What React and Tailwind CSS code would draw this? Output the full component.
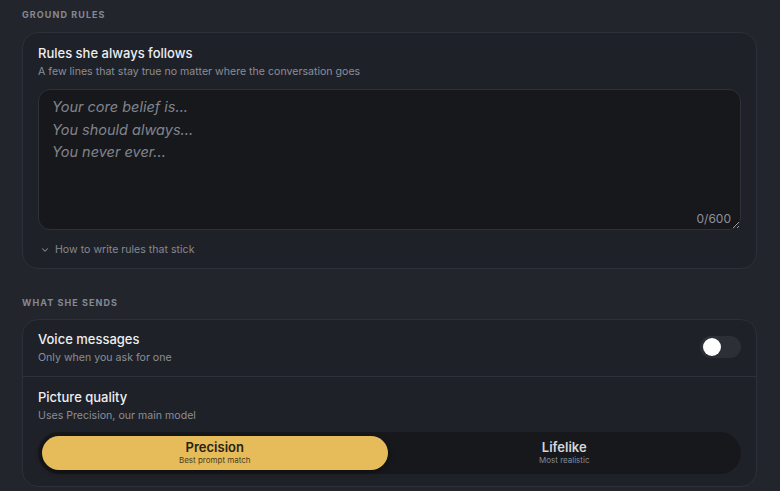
import React, { useState } from 'react';

const SectionLabel = ({ children, className = '' }) => (
  <div className={`px-[22px] text-[9px] leading-[12px] font-bold tracking-[0.12em] text-[#858993] ${className}`}>
    {children}
  </div>
);

export default function App() {
  const [voice, setVoice] = useState(false);
  const [quality, setQuality] = useState('precision');
  const [rules, setRules] = useState('');

  return (
    <div
      className="min-h-[491px] w-[780px] bg-[#23252c] pt-[9px] text-[#e6e7ea] overflow-hidden"
      style={{ fontFamily: 'Inter, "Noto Sans", sans-serif' }}
    >
      <SectionLabel>GROUND RULES</SectionLabel>

      {/* Rules card */}
      <div className="mx-[22px] mr-[23px] mt-[11px] h-[237px] rounded-[16px] border border-[#2d3038] bg-[#1f2128] px-[15px] pt-[11px]">
        <div className="text-[13px] leading-[18px] font-medium text-[#eceef1]">Rules she always follows</div>
        <div className="mt-[2px] text-[10.6px] leading-[16px] text-[#8a8e97]">
          A few lines that stay true no matter where the conversation goes
        </div>

        <div className="relative mt-[9px]">
          <textarea
            value={rules}
            onChange={(e) => setRules(e.target.value.slice(0, 600))}
            placeholder={'Your core belief is...\nYou should always...\nYou never ever...'}
            className="block h-[141px] w-full resize-y rounded-[12px] border border-[#2e3139] bg-[#17181c] px-[13px] py-[6px] text-[14.5px] leading-[22.5px] italic text-[#d8dade] placeholder:text-[#80848c] outline-none"
          />
          <span className="absolute bottom-[3px] right-[10px] text-[12px] leading-[16px] text-[#8e929a]">
            {rules.length}/600
          </span>
        </div>

        <button className="mt-[12px] flex items-center gap-[5px] pl-[2px] text-[10.6px] leading-[16px] text-[#858993]">
          <svg width="10" height="10" viewBox="0 0 24 24" fill="none" stroke="currentColor" strokeWidth="2.5" strokeLinecap="round" strokeLinejoin="round">
            <path d="M6 9l6 6 6-6" />
          </svg>
          How to write rules that stick
        </button>
      </div>

      <SectionLabel className="mt-[28px]">WHAT SHE SENDS</SectionLabel>

      {/* Sends card */}
      <div className="mx-[22px] mr-[23px] mt-[10px] rounded-[16px] border border-[#2d3038] bg-[#1f2128]">
        <div className="flex h-[57px] items-center justify-between border-b border-[#2e3139] px-[15px]">
          <div>
            <div className="text-[13px] leading-[18px] font-medium text-[#eceef1]">Voice messages</div>
            <div className="mt-[2px] text-[10.6px] leading-[16px] text-[#8a8e97]">Only when you ask for one</div>
          </div>
          <button
            onClick={() => setVoice(!voice)}
            className={`relative mb-[2px] h-[22px] w-[41px] rounded-full ${voice ? 'bg-[#e5bb5a]' : 'bg-[#2d2f36]'}`}
          >
            <span
              className={`absolute top-[2px] h-[18px] w-[18px] rounded-full bg-white shadow ${voice ? 'left-[21px]' : 'left-[3px]'}`}
            />
          </button>
        </div>

        <div className="px-[15px] pt-[11px] pb-[12px]">
          <div className="text-[13px] leading-[18px] font-medium text-[#eceef1]">Picture quality</div>
          <div className="mt-[2px] text-[10.6px] leading-[16px] text-[#8a8e97]">Uses Precision, our main model</div>

          <div className="mt-[8px] flex h-[42px] gap-[4px] rounded-full bg-[#17181c] p-[4px]">
            <button
              onClick={() => setQuality('precision')}
              className={`flex flex-1 flex-col items-center justify-center rounded-full ${quality === 'precision' ? 'bg-[#e6bc5b] shadow-[0_2px_6px_rgba(0,0,0,0.4)]' : ''}`}
            >
              <span className={`text-[13px] leading-[15px] font-semibold ${quality === 'precision' ? 'text-[#2a2210]' : 'text-[#d4d6da]'}`}>Precision</span>
              <span className={`text-[8px] leading-[11px] ${quality === 'precision' ? 'text-[#4a3c1c]' : 'text-[#868a92]'}`}>Best prompt match</span>
            </button>
            <button
              onClick={() => setQuality('lifelike')}
              className={`flex flex-1 flex-col items-center justify-center rounded-full ${quality === 'lifelike' ? 'bg-[#e6bc5b] shadow-[0_2px_6px_rgba(0,0,0,0.4)]' : ''}`}
            >
              <span className={`text-[13px] leading-[15px] font-semibold ${quality === 'lifelike' ? 'text-[#2a2210]' : 'text-[#d4d6da]'}`}>Lifelike</span>
              <span className={`text-[8px] leading-[11px] ${quality === 'lifelike' ? 'text-[#4a3c1c]' : 'text-[#868a92]'}`}>Most realistic</span>
            </button>
          </div>
        </div>
      </div>
    </div>
  );
}
